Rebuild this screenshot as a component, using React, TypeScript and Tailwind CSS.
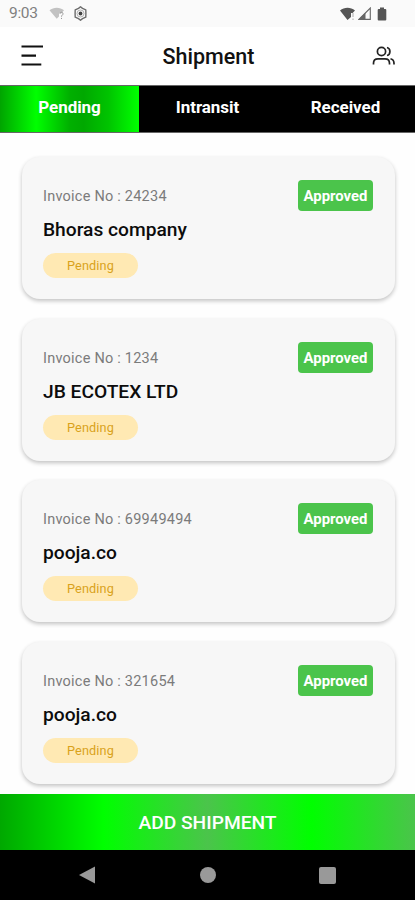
import React from "react";

const shipments = [
  { invoice: "24234", company: "Bhoras company" },
  { invoice: "1234", company: "JB ECOTEX LTD" },
  { invoice: "69949494", company: "pooja.co" },
  { invoice: "321654", company: "pooja.co" },
];

function StatusBar() {
  return (
    <div className="flex h-[27px] shrink-0 items-center bg-[#fafafa] pl-[9px] pr-[28px] text-[#808080]">
      <span className="w-[30px] pt-px text-[15.5px] leading-none tracking-[-0.3px]">9:03</span>
      <svg className="ml-[10px]" width="16" height="13" viewBox="0 0 16 13">
        <path d="M0.5 3.2C4.5-.2 11-.2 15 3.2L12.5 6.2H10V9.5L7.7 11.8Z" fill="#c2c2c2" />
        <path d="M11 6.7C11 4.8 14 4.8 14 6.7C14 8.2 12.5 8 12.5 9.7M12.5 10.9V12" fill="none" stroke="#999" strokeWidth="1" />
      </svg>
      <svg className="ml-[8px]" width="15" height="15" viewBox="0 0 15 15" fill="none" stroke="#6c6c6c">
        <path d="M7.500 .8L9.500 2.400L12.800 3.800L12.900 7.500L12.800 11.200L9.500 12.600L7.500 14.200L5.500 12.600L2.200 11.200L2.100 7.500L2.200 3.800L5.500 2.400Z" strokeWidth="1.400" strokeLinejoin="round" />
        <circle cx="7.500" cy="7.500" r="3.500" strokeWidth="0.500" />
        <circle cx="7.500" cy="7.500" r="1.900" fill="#444" stroke="none" />
      </svg>
      <div className="ml-auto flex items-center">
        <svg width="16" height="14" viewBox="0 0 16 14">
          <path d="M0 3.400C4.400-.2 10.600-.2 15 3.400L12.600 6H11v4L7.500 13Z" fill="#555" />
          <path d="M13 6v4M13 11.500V13" stroke="#aaa" />
        </svg>
        <svg className="ml-[2px]" width="13" height="13" viewBox="0 0 13 13">
          <path d="M12.300 1V12.400H.9Z" fill="none" stroke="#666" strokeWidth="1.100" />
          <path d="M.3 12.700L7.500 5.400V12.700Z" fill="#666" />
        </svg>
        <svg className="ml-[6px]" width="10" height="14" viewBox="0 0 10 14">
          <path d="M3 .5h4V2h1.300a1 1 0 0 1 1 1v9.500a1 1 0 0 1-1 1H1.700a1 1 0 0 1-1-1V3a1 1 0 0 1 1-1H3Z" fill="#555" />
        </svg>
      </div>
    </div>
  );
}

function Header() {
  return (
    <header className="grid h-[58px] shrink-0 grid-cols-[1fr_auto_1fr] items-center bg-white pl-[21px] pr-[19px]">
      <svg width="22" height="22" viewBox="0 0 22 22" stroke="#111" strokeWidth="2.200" className="-mt-px">
        <path d="M.5 1.500H22M.5 10.600H15M.5 19.500H20.300" />
      </svg>
      <h1 className="pt-[2px] text-[21.5px] font-medium leading-none text-[#111]">Shipment</h1>
      <svg className="justify-self-end" width="24" height="20" viewBox="0 0 24 20" fill="none" stroke="#222" strokeWidth="1.700">
        <circle cx="9.500" cy="5.500" r="4.100" />
        <path d="M1.500 18.500V17.200C1.500 14.500 3.500 12.900 6 12.900H13C15.500 12.900 17.500 14.500 17.500 17.200V18.500M15 1.500C18.900 2.500 18.900 8.500 15 9.500M18.500 12.700C20.900 13.300 22 15 22 17.200V18.500" />
      </svg>
    </header>
  );
}

function Tabs() {
  return (
    <nav className="grid h-[48px] shrink-0 grid-cols-[139px_137px_139px] border-y border-[#666] bg-black text-center text-[17px] font-bold leading-[43px] tracking-[-0.05px] text-white">
      <div className="bg-[linear-gradient(90deg,#00a400_0%,#00ff00_26%,#00b000_50%,#00a800_60%,#00c400_78%,#00ff00_99%)]">Pending</div>
      <div>Intransit</div>
      <div>Received</div>
    </nav>
  );
}

function ShipmentCard({ invoice, company }: { invoice: string; company: string }) {
  return (
    <article className="flex h-[142px] shrink-0 items-start justify-between rounded-[18px] bg-[#f7f7f7] pl-[21px] pr-[22px] pt-[23px] shadow-[0_2px_4px_rgba(0,0,0,0.24)]">
      <div className="pt-[8px]">
        <p className="text-[14.5px] leading-[17px] tracking-[0.23px] text-[#7b7b7b]">Invoice No : {invoice}</p>
        <h2 className="mt-[12px] text-[19.2px] font-medium leading-[25px] text-[#0c0c0c]">{company}</h2>
        <div className="mt-[11px] h-[25px] w-[95px] rounded-full bg-[#ffe9b3] text-center text-[12.7px] leading-[25px] tracking-[0.15px] text-[#d9a21b]">Pending</div>
      </div>
      <div className="h-[31px] w-[75px] rounded-[4px] bg-[#4bc44b] text-center text-[14.9px] font-bold leading-[33px] text-white">Approved</div>
    </article>
  );
}

export default function App() {
  return (
    <div className="flex h-[900px] w-[415px] flex-col overflow-hidden bg-white font-[Roboto,sans-serif]">
      <StatusBar />
      <Header />
      <Tabs />
      <main className="flex h-[661px] shrink-0 flex-col gap-[19.500px] overflow-hidden bg-[#fefefe] pl-[22px] pr-[20px] pt-[24px]">
        {shipments.map((s) => (
          <ShipmentCard key={s.invoice} invoice={s.invoice} company={s.company} />
        ))}
      </main>
      <button className="h-[56px] shrink-0 bg-[linear-gradient(90deg,#00a800_0%,#00ff00_25%,#4bc44b_50%,#00ff00_75%,#4bc44b_100%)] pt-px text-center text-[19.200px] font-medium leading-[56px] text-white">
        ADD SHIPMENT
      </button>
      <footer className="flex h-[50px] shrink-0 items-center justify-between bg-black pl-[79px] pr-[79px]">
        <svg width="17" height="18" viewBox="0 0 17 18"><path d="M0 9L16 .5V17.500Z" fill="#999" /></svg>
        <div className="size-[16px] rounded-full bg-[#999]" />
        <div className="size-[17px] rounded-[2px] bg-[#999]" />
      </footer>
    </div>
  );
}
